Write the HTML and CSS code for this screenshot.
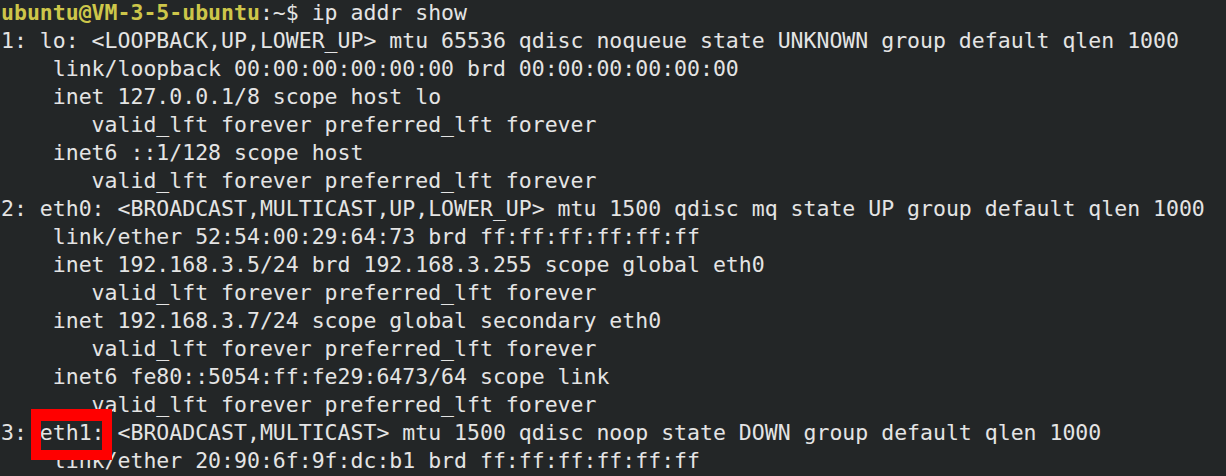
FILE: index.html
```html
<!DOCTYPE html>
<html>
<head>
<meta charset="utf-8">
<link rel="stylesheet" href="styles.css">
</head>
<body>
<div class="term">
<pre class="out"><span class="prompt">ubuntu@VM-3-5-ubuntu</span>:~$ ip addr show
1: lo: &lt;LOOPBACK,UP,LOWER_UP&gt; mtu 65536 qdisc noqueue state UNKNOWN group default qlen 1000
    link/loopback 00:00:00:00:00:00 brd 00:00:00:00:00:00
    inet 127.0.0.1/8 scope host lo
       valid_lft forever preferred_lft forever
    inet6 ::1/128 scope host
       valid_lft forever preferred_lft forever
2: eth0: &lt;BROADCAST,MULTICAST,UP,LOWER_UP&gt; mtu 1500 qdisc mq state UP group default qlen 1000
    link/ether 52:54:00:29:64:73 brd ff:ff:ff:ff:ff:ff
    inet 192.168.3.5/24 brd 192.168.3.255 scope global eth0
       valid_lft forever preferred_lft forever
    inet 192.168.3.7/24 scope global secondary eth0
       valid_lft forever preferred_lft forever
    inet6 fe80::5054:ff:fe29:6473/64 scope link
       valid_lft forever preferred_lft forever
3: eth1: &lt;BROADCAST,MULTICAST&gt; mtu 1500 qdisc noop state DOWN group default qlen 1000
    link/ether 20:90:6f:9f:dc:b1 brd ff:ff:ff:ff:ff:ff</pre>
<div class="mark"></div>
</div>
</body>
</html>
```
FILE: styles.css
```css
html, body {
  margin: 0;
  padding: 0;
  background: #232627;
  overflow: hidden;
}
.term {
  position: relative;
  width: 1226px;
  height: 476px;
  background: #232627;
  overflow: hidden;
}
.out {
  margin: -1px 0 0 0;
  padding: 0 0 0 1px;
  font-family: "DejaVu Sans Mono", monospace;
  font-size: 21.5px;
  line-height: 28px;
  color: #e4e4e4;
  white-space: pre;
}
.prompt {
  font-weight: bold;
  color: #cdc64a;
}
.mark {
  position: absolute;
  left: 31px;
  top: 409px;
  width: 61px;
  height: 29px;
  border: 10px solid #ff0000;
  border-top-width: 12px;
}
```
